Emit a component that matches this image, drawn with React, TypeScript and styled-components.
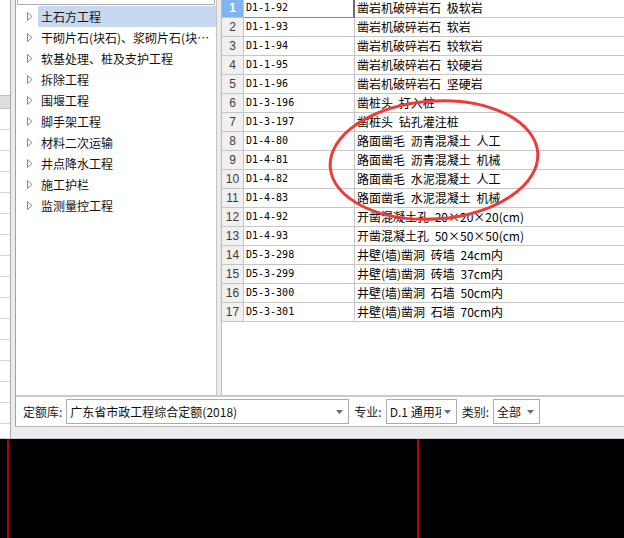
import React from "react";
import styled, { createGlobalStyle } from "styled-components";

const GlobalStyle = createGlobalStyle`
  * { box-sizing: border-box; }
  html, body { margin: 0; padding: 0; background: #000; }
  body { font-family: "Noto Sans CJK SC", "Liberation Sans", sans-serif; }
`;

const treeItems = [
  "土石方工程",
  "干砌片石(块石)、浆砌片石(块石)工程",
  "软基处理、桩及支护工程",
  "拆除工程",
  "围堰工程",
  "脚手架工程",
  "材料二次运输",
  "井点降水工程",
  "施工护栏",
  "监测量控工程",
];

const rows: [string, string][] = [
  ["D1-1-92", "凿岩机破碎岩石 极软岩"],
  ["D1-1-93", "凿岩机破碎岩石 软岩"],
  ["D1-1-94", "凿岩机破碎岩石 较软岩"],
  ["D1-1-95", "凿岩机破碎岩石 较硬岩"],
  ["D1-1-96", "凿岩机破碎岩石 坚硬岩"],
  ["D1-3-196", "凿桩头 打入桩"],
  ["D1-3-197", "凿桩头 钻孔灌注桩"],
  ["D1-4-80", "路面凿毛 沥青混凝土 人工"],
  ["D1-4-81", "路面凿毛 沥青混凝土 机械"],
  ["D1-4-82", "路面凿毛 水泥混凝土 人工"],
  ["D1-4-83", "路面凿毛 水泥混凝土 机械"],
  ["D1-4-92", "开凿混凝土孔 20×20×20(cm)"],
  ["D1-4-93", "开凿混凝土孔 50×50×50(cm)"],
  ["D5-3-298", "井壁(墙)凿洞 砖墙 24cm内"],
  ["D5-3-299", "井壁(墙)凿洞 砖墙 37cm内"],
  ["D5-3-300", "井壁(墙)凿洞 石墙 50cm内"],
  ["D5-3-301", "井壁(墙)凿洞 石墙 70cm内"],
];

const Arrow = () => (
  <svg width="7" height="4" viewBox="0 0 7 4">
    <polygon points="0,0 7,0 3.5,4" fill="#6a6a6a" />
  </svg>
);

const Expander = () => (
  <svg width="6" height="9" viewBox="0 0 6 9">
    <polygon points="0.5,0.5 5,4.5 0.5,8.5" fill="#fff" stroke="#8a8a8a" strokeWidth="1" />
  </svg>
);

const App = () => {
  return (
    <Root>
      <GlobalStyle />
      <Window>
        <LeftStrip>
          <StripTop />
          <StripBand />
          {Array.from({ length: 16 }).map((_, i) => (
            <StripRow key={i} />
          ))}
        </LeftStrip>

        <Dialog>
          <Main>
            <TreePanel>
              <SearchBox />
              <TreeList>
                {treeItems.map((t, i) => (
                  <TreeRow key={t}>
                    <Expander />
                    <TreeLabel $selected={i === 0}>{t}</TreeLabel>
                  </TreeRow>
                ))}
              </TreeList>
            </TreePanel>
            <Splitter />
            <Table>
              <Rows>
                {rows.map(([code, name], i) => (
                  <Row key={code}>
                    <NumCell $active={i === 0}>{i + 1}</NumCell>
                    <CodeCell $active={i === 0}>{code}</CodeCell>
                    <NameCell>{name}</NameCell>
                  </Row>
                ))}
              </Rows>
            </Table>
          </Main>

          <BottomBar>
            <Label>定额库:</Label>
            <Combo $width={283}>
              <ComboText>广东省市政工程综合定额(2018)</ComboText>
              <Arrow />
            </Combo>
            <Label>专业:</Label>
            <Combo $width={71}>
              <ComboText>D.1 通用项目</ComboText>
              <Arrow />
            </Combo>
            <Label>类别:</Label>
            <Combo $width={47}>
              <ComboText>全部</ComboText>
              <Arrow />
            </Combo>
          </BottomBar>
        </Dialog>
      </Window>

      <BlackArea>
        <RedLine />
        <RedLine />
      </BlackArea>

      <Overlay width="624" height="538" viewBox="0 0 624 538">
        <ellipse
          cx="434"
          cy="160"
          rx="104"
          ry="59"
          transform="rotate(-4 434 160)"
          fill="none"
          stroke="#ef3a3a"
          strokeWidth="3"
        />
      </Overlay>
    </Root>
  );
};

const Root = styled.div`
  position: relative;
  width: 624px;
  height: 538px;
  overflow: hidden;
  display: flex;
  flex-direction: column;
`;

const Window = styled.div`
  height: 439px;
  flex-shrink: 0;
  display: flex;
  background: #ececec;
  border-bottom: 1px solid #c3cad4;
`;

const LeftStrip = styled.div`
  width: 11px;
  flex-shrink: 0;
  background: #fff;
  border-right: 1px solid #a9a9a9;
  display: flex;
  flex-direction: column;
  overflow: hidden;
`;

const StripTop = styled.div`
  height: 96px;
  flex-shrink: 0;
  border-bottom: 1px solid #bdbdbd;
`;

const StripBand = styled.div`
  height: 13px;
  flex-shrink: 0;
  background: #dedede;
  border-bottom: 1px solid #c4c4c4;
`;

const StripRow = styled.div`
  height: 21px;
  flex-shrink: 0;
  border-bottom: 1px solid #d4d4d4;
`;

const Dialog = styled.div`
  flex: 1;
  margin-left: 4px;
  height: 427px;
  display: flex;
  flex-direction: column;
  border-left: 1px solid #a3a3a3;
  border-bottom: 1px solid #b8b8b8;
`;

const Main = styled.div`
  height: 397px;
  flex-shrink: 0;
  display: flex;
  border-bottom: 2px solid #c9c9c9;
`;

const TreePanel = styled.div`
  width: 201px;
  flex-shrink: 0;
  background: #fff;
  border-right: 1px solid #c6c6c6;
  overflow: hidden;
`;

const SearchBox = styled.div`
  height: 20px;
  margin: -15px 1px 0;
  border: 1px solid #acacac;
  background: #fff;
`;

const TreeList = styled.div`
  margin-top: 1px;
  display: flex;
  flex-direction: column;
`;

const TreeRow = styled.div`
  height: 21px;
  display: flex;
  align-items: center;
  padding-left: 11px;
  gap: 5px;
  font-size: 12px;
  color: #111;
`;

const TreeLabel = styled.div<{ $selected?: boolean }>`
  flex: 1;
  min-width: 0;
  height: 21px;
  line-height: 21px;
  padding-left: 3px;
  white-space: nowrap;
  overflow: hidden;
  text-overflow: ellipsis;
  background: ${(p) => (p.$selected ? "#c8d9ef" : "transparent")};
`;

const Splitter = styled.div`
  width: 5px;
  flex-shrink: 0;
  background: #ebebeb;
  border-right: 1px solid #bcbcbc;
`;

const Table = styled.div`
  flex: 1;
  min-width: 0;
  background: #fff;
  overflow: hidden;
`;

const Rows = styled.div`
  margin-top: -1px;
  display: flex;
  flex-direction: column;
`;

const Row = styled.div`
  display: grid;
  grid-template-columns: 22px 111px 1fr;
  height: 19px;
`;

const Cell = styled.div`
  height: 19px;
  line-height: 18px;
  border-bottom: 1px solid #c6c6c6;
  border-right: 1px solid #c6c6c6;
  display: flex;
  align-items: center;
  white-space: nowrap;
  overflow: hidden;
`;

const NumCell = styled(Cell)<{ $active?: boolean }>`
  justify-content: center;
  font-family: "Liberation Sans", sans-serif;
  font-size: 12px;
  font-weight: ${(p) => (p.$active ? 700 : 400)};
  color: ${(p) => (p.$active ? "#fff" : "#3c3c3c")};
  background: ${(p) => (p.$active ? "#80b6ef" : "#f0f0f0")};
`;

const CodeCell = styled(Cell)<{ $active?: boolean }>`
  padding-left: 2px;
  font-family: "DejaVu Sans Mono", monospace;
  font-size: 10px;
  color: #000;
  border-right: ${(p) => (p.$active ? "2px solid #6e6e6e" : "1px solid #c6c6c6")};
  border-bottom-color: ${(p) => (p.$active ? "#8c8c8c" : "#c6c6c6")};
`;

const NameCell = styled(Cell)`
  padding-left: 2px;
  font-size: 12px;
  word-spacing: 3px;
  color: #000;
  border-right: none;
`;

const BottomBar = styled.div`
  flex: 1;
  display: flex;
  align-items: center;
  gap: 4px;
  padding-left: 6px;
  background: #fff;
`;

const Label = styled.span`
  font-size: 12px;
  color: #222;
  white-space: nowrap;
  margin-left: 1px;
`;

const Combo = styled.div<{ $width: number }>`
  width: ${(p) => p.$width}px;
  height: 25px;
  flex-shrink: 0;
  display: flex;
  align-items: center;
  gap: 3px;
  padding: 0 5px 0 3px;
  border: 1px solid #acacac;
  background: #fff;
`;

const ComboText = styled.span`
  flex: 1;
  min-width: 0;
  overflow: hidden;
  white-space: nowrap;
  font-size: 12px;
  color: #111;
`;

const BlackArea = styled.div`
  flex: 1;
  display: flex;
  gap: 408px;
  padding-left: 7px;
  background: #000;
`;

const RedLine = styled.div`
  width: 2px;
  background: #b80000;
`;

const Overlay = styled.svg`
  position: absolute;
  left: 0;
  top: 0;
  pointer-events: none;
`;

export default App;
